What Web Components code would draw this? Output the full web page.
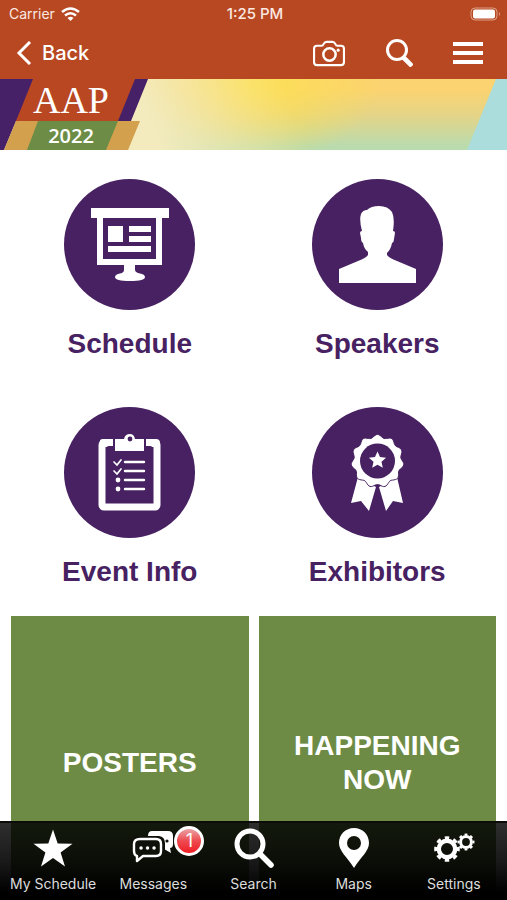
<!DOCTYPE html>
<html lang="en">
<head>
<meta charset="utf-8">
<meta name="viewport" content="width=device-width, initial-scale=1">
<title>AAP 2022</title>
<style>
    body {
        margin: 0;
        background: #fff;
        font-family: Inter, "Liberation Sans", sans-serif;
    }
</style>
</head>
<body>
<event-app>
    <status-bar slot="top" carrier="Carrier" time="1:25 PM"></status-bar>
    <nav-bar slot="top">Back</nav-bar>
    <event-banner year="2022">AAP</event-banner>
    <tile-grid>
        <icon-tile icon="schedule">Schedule</icon-tile>
        <icon-tile icon="speakers">Speakers</icon-tile>
        <icon-tile icon="info">Event Info</icon-tile>
        <icon-tile icon="exhibitors">Exhibitors</icon-tile>
        <color-tile>POSTERS</color-tile>
        <color-tile>HAPPENING NOW</color-tile>
    </tile-grid>
    <tab-bar slot="bottom">
        <tab-item icon="star">My Schedule</tab-item>
        <tab-item icon="messages" badge="1">Messages</tab-item>
        <tab-item icon="search">Search</tab-item>
        <tab-item icon="pin">Maps</tab-item>
        <tab-item icon="gears">Settings</tab-item>
    </tab-bar>
</event-app>

<script>
// Icons inside the purple circles, 131 x 131
const tileIcons = {
    schedule: `
        <path fill="#fff" d="M27 29H105V39H98V86H71V91Q71 93 74 94Q81 95 81 98Q81 102 66 102Q51 102 51 98Q51 95 58 94Q60 93 60 91V86H33V39H27Z"/>
        <path fill="#472161" d="M39 39H92V80H39Z"/>
        <path fill="#fff" d="M44 47H59V63H44ZM65 47H87V53H65ZM65 57H87V63H65ZM44 67H87V73H44Z"/>`,
    speakers: `
        <path fill="#fff" d="M27 104V90L46 82Q54 79 56 76V73Q52 70 51 64Q49 63 49 59L48 54Q48 52 50 52Q47 41 49 35Q51 31 55 31Q59 27 67 27Q76 27 80 33Q83 39 81 52Q83 52 83 54L82 60Q82 63 80 64Q79 70 75 74V76Q77 79 85 82L104 90V104Z"/>`,
    info: `
        <rect x="38" y="36" width="55" height="64" rx="2" fill="none" stroke="#fff" stroke-width="7"/>
        <path fill="#fff" d="M36 36Q35 32 39 32H92Q96 32 96 36V40H36Z"/>
        <path fill="#472161" d="M49 30H82V39H86Q89 39 89 43V48H42V43Q42 39 45 39H49Z"/>
        <path fill="#fff" d="M51 32H60Q61 27 66 27Q70 27 71 32H80V44H51Z"/>
        <circle cx="66" cy="32" r="2.4" fill="#472161"/>
        <path d="M61 55H80M61 64H80M61 73H80M61 82H80" stroke="#fff" stroke-width="2.4" stroke-linecap="round"/>
        <path d="M50 55L53 58L57 53M50 64L53 67L57 62" fill="none" stroke="#fff" stroke-width="1.7" stroke-linecap="round"/>
        <circle cx="54" cy="73" r="2.4" fill="#fff"/><circle cx="54" cy="82" r="2.4" fill="#fff"/>`,
    exhibitors: `
        <path fill="#fff" d="M46 70L39 96L49 94L57 104L64 80ZM85 70L91 96L81 94L74 104L67 80Z"/>
        <path d="${rosette(65.5, 54, 25, 1.5, 11)}" fill="#fff" stroke="#472161" stroke-width="1"/>
        <circle cx="65.5" cy="54" r="17.5" fill="#472161"/>
        <path fill="#fff" d="${star(65.5, 53.5, 9, 4.2)}"/>`
};

// Tab bar icons, 44 x 44
const tabIcons = {
    star: `<path fill="#fff" d="${star(22, 24, 20.5, 8)}"/>`,
    messages: `
        <path fill="#fff" d="M21 5H37Q42 5 42 10V18Q42 22 39 22L40 27L33 23H17V10Q17 5 21 5Z"/>
        <path fill="#0e1109" d="M6 10H28Q34 11 34 17V26Q34 31 29 32H14L2 38L4 32Q0 31 0 26V17Q0 11 6 10Z"/>
        <path d="M9 13H25Q30 13 30 18V25Q30 30 25 30H12L6 35V30Q3 29 3 25V18Q3 13 9 13Z" fill="none" stroke="#fff" stroke-width="2.4" stroke-linejoin="round"/>
        <path d="M10 22H10.1M16.5 22H16.6M23 22H23.1" stroke="#fff" stroke-width="3.4" stroke-linecap="round"/>
        <circle cx="36" cy="15" r="1.6" fill="#0e1109"/>`,
    search: `
        <circle cx="18" cy="18" r="13" fill="none" stroke="#fff" stroke-width="5"/>
        <path d="M28 28L39 39" stroke="#fff" stroke-width="5.6" stroke-linecap="round"/>`,
    pin: `<path fill="#fff" fill-rule="evenodd" d="M22 2C13.5 2 7 8.5 7 17C7 25 15 31 22 42C29 31 37 25 37 17C37 8.5 30.5 2 22 2ZM22 10A7 7 0 1 1 22 24A7 7 0 1 1 22 10Z"/>`,
    gears: `
        <g fill="none" stroke="#fff">
            <circle cx="15" cy="23" r="8.2" stroke-width="4.4"/>
            <circle cx="15" cy="23" r="11.3" stroke-width="3" pathLength="80" stroke-dasharray="5 5" stroke-dashoffset="2.5"/>
            <circle cx="34" cy="16" r="5.4" stroke-width="3"/>
            <circle cx="34" cy="16" r="7.5" stroke-width="2" pathLength="80" stroke-dasharray="5 5" stroke-dashoffset="2.5"/>
        </g>`
};

function star(cx, cy, outer, inner) {
    const points = [];
    for (let i = 0; i < 10; i++) {
        const r = i % 2 ? inner : outer;
        const a = Math.PI * (i / 5 - 0.5);
        points.push((cx + r * Math.cos(a)).toFixed(1) + ' ' + (cy + r * Math.sin(a)).toFixed(1));
    }
    return 'M' + points.join('L') + 'Z';
}

function rosette(cx, cy, radius, wave, lobes) {
    const points = [];
    for (let i = 0; i < 132; i++) {
        const a = Math.PI * 2 * i / 132;
        const r = radius + wave * Math.sin(a * lobes);
        points.push((cx + r * Math.cos(a)).toFixed(1) + ' ' + (cy + r * Math.sin(a)).toFixed(1));
    }
    return 'M' + points.join('L') + 'Z';
}

class EventApp extends HTMLElement {
    connectedCallback() {
        const shadow = this.attachShadow({ mode: 'open' });
        shadow.innerHTML = `
            <style>
                :host {
                    display: grid;
                    grid-template-rows: auto minmax(0, 1fr) auto;
                    height: 100vh;
                }
                header {
                    grid-area: 1 / 1;
                    background: #b74821;
                }
                /* content scrolls under the translucent tab bar */
                main {
                    grid-area: 2 / 1 / 4 / 2;
                    overflow-y: auto;
                    scrollbar-width: none;
                }
                footer {
                    grid-area: 3 / 1;
                    z-index: 1;
                }
            </style>
            <header><slot name="top"></slot></header>
            <main><slot></slot></main>
            <footer><slot name="bottom"></slot></footer>
        `;
    }
}
customElements.define('event-app', EventApp);

class StatusBar extends HTMLElement {
    connectedCallback() {
        const shadow = this.attachShadow({ mode: 'open' });
        shadow.innerHTML = `
            <style>
                :host {
                    display: grid;
                    grid-template-columns: 1fr auto 1fr;
                    align-items: center;
                    height: 27px;
                    padding: 0 6px 0 9px;
                    font-size: 14px;
                    color: #fbe9e2;
                }
                .carrier {
                    display: flex;
                    align-items: center;
                    gap: 6px;
                }
                .time {
                    font-size: 15px;
                    font-weight: 500;
                }
                .battery {
                    justify-self: end;
                }
                svg {
                    display: block;
                }
            </style>
            <div class="carrier">
                <span>${this.getAttribute('carrier')}</span>
                <svg width="19" height="14" viewBox="0 0 19 14" fill="none" stroke="#fff" stroke-width="2.6">
                    <path d="M1 5Q9.5 -2 18 5"/>
                    <path d="M4 8.5Q9.5 4 15 8.5"/>
                    <path d="M6.5 11Q9.5 8.5 12.5 11L9.5 14Z" fill="#fff" stroke="none"/>
                </svg>
            </div>
            <span class="time">${this.getAttribute('time')}</span>
            <svg class="battery" width="31" height="14" viewBox="0 0 31 14">
                <rect x="1" y="1" width="26" height="12" rx="4" fill="none" stroke="#dd9f88"/>
                <rect x="3" y="2.5" width="22" height="9" rx="2" fill="#fff"/>
                <path d="M29 5Q31 7 29 9Z" fill="#dd9f88"/>
            </svg>
        `;
    }
}
customElements.define('status-bar', StatusBar);

class NavBar extends HTMLElement {
    connectedCallback() {
        const shadow = this.attachShadow({ mode: 'open' });
        shadow.innerHTML = `
            <style>
                :host {
                    display: flex;
                    align-items: center;
                    height: 52px;
                    padding: 0 24px 0 16px;
                    color: #fff;
                }
                button {
                    display: flex;
                    align-items: center;
                    padding: 0;
                    border: 0;
                    background: none;
                    color: inherit;
                    font: 500 20px Inter, sans-serif;
                    cursor: pointer;
                }
                .back {
                    gap: 10px;
                }
                .actions {
                    display: flex;
                    align-items: center;
                    gap: 40px;
                    margin-left: auto;
                }
                svg {
                    display: block;
                    fill: none;
                    stroke: #fff;
                }
            </style>
            <button class="back">
                <svg width="16" height="24" viewBox="0 0 16 24" stroke-width="3"><path d="M14 1L3 12L14 23"/></svg>
                <slot></slot>
            </button>
            <div class="actions">
                <button aria-label="Camera">
                    <svg width="32" height="27" viewBox="0 0 33 28" stroke-width="2.2">
                        <path d="M4 6H9Q10 6 11 4Q12 2 14 2H20Q22 2 23 4Q24 6 25 6H29Q32 6 32 9V23Q32 26 29 26H4Q1 26 1 23V9Q1 6 4 6Z"/>
                        <circle cx="17" cy="15" r="6.4" stroke-width="2.6"/>
                        <circle cx="26" cy="10.5" r="1.6" fill="#fff" stroke="none"/>
                    </svg>
                </button>
                <button aria-label="Search">
                    <svg width="28" height="28" viewBox="0 0 28 28">
                        <circle cx="12" cy="11" r="9.5" stroke-width="3"/>
                        <path d="M18 18L27 27" stroke-width="4.6"/>
                    </svg>
                </button>
                <button aria-label="Menu">
                    <svg width="30" height="24" viewBox="0 0 30 24" stroke-width="4"><path d="M0 3H30M0 12H30M0 21H30"/></svg>
                </button>
            </div>
        `;
    }
}
customElements.define('nav-bar', NavBar);

class EventBanner extends HTMLElement {
    connectedCallback() {
        const shadow = this.attachShadow({ mode: 'open' });
        shadow.innerHTML = `
            <style>
                :host {
                    display: flex;
                    justify-content: space-between;
                    height: 71px;
                    background:
                        linear-gradient(70deg, #f3ebbd 30%, rgba(243, 235, 189, 0) 58%),
                        radial-gradient(ellipse 130px 80px at 250px 5px, #fce052, rgba(252, 224, 82, 0)),
                        linear-gradient(#fbd370 15%, #e5d487 50%, #b9dbae 95%);
                }
                .logo {
                    display: grid;
                }
                .logo > * {
                    grid-area: 1 / 1;
                }
                .words {
                    display: grid;
                    grid-template-rows: 42px 29px;
                    justify-items: center;
                    align-items: center;
                    width: 142px;
                    color: #fff;
                }
                .name {
                    font: 38px "Liberation Serif", serif;
                }
                .year {
                    font: 600 20px "Open Sans", sans-serif;
                }
                svg {
                    display: block;
                }
            </style>
            <div class="logo">
                <svg width="148" height="71" viewBox="0 0 148 71">
                    <path fill="#472167" d="M0 0H148L131 42H16L4 71H0Z"/>
                    <path fill="#b94722" d="M33 0H135L118 42H16Z"/>
                    <path fill="#d3a04d" d="M16 42H140L128 71H4Z"/>
                    <path fill="#6d8d47" d="M38 42H118L106 71H27Z"/>
                </svg>
                <div class="words">
                    <span class="name"><slot></slot></span>
                    <span class="year">${this.getAttribute('year')}</span>
                </div>
            </div>
            <svg width="40" height="71" viewBox="0 0 40 71"><path fill="#aadddb" d="M29 0H40V71H0Z"/></svg>
        `;
    }
}
customElements.define('event-banner', EventBanner);

class TileGrid extends HTMLElement {
    connectedCallback() {
        const shadow = this.attachShadow({ mode: 'open' });
        shadow.innerHTML = `
            <style>
                :host {
                    display: grid;
                    grid-template-columns: 1fr 1fr;
                    column-gap: 10px;
                    padding: 10px 11px;
                    font-family: "Liberation Sans", sans-serif;
                    font-size: 28px;
                    font-weight: 700;
                }
            </style>
            <slot></slot>
        `;
    }
}
customElements.define('tile-grid', TileGrid);

class IconTile extends HTMLElement {
    connectedCallback() {
        const shadow = this.attachShadow({ mode: 'open' });
        shadow.innerHTML = `
            <style>
                :host {
                    display: block;
                }
                a {
                    display: flex;
                    flex-direction: column;
                    align-items: center;
                    gap: 18px;
                    padding: 19px 0 28px;
                    color: #472161;
                    line-height: 32px;
                    text-decoration: none;
                }
                svg {
                    display: block;
                    border-radius: 50%;
                    background: #472161;
                }
            </style>
            <a href="#${this.getAttribute('icon')}">
                <svg width="131" height="131" viewBox="0 0 131 131">${tileIcons[this.getAttribute('icon')]}</svg>
                <span><slot></slot></span>
            </a>
        `;
    }
}
customElements.define('icon-tile', IconTile);

class ColorTile extends HTMLElement {
    connectedCallback() {
        const shadow = this.attachShadow({ mode: 'open' });
        shadow.innerHTML = `
            <style>
                :host {
                    display: block;
                }
                a {
                    display: flex;
                    align-items: center;
                    justify-content: center;
                    min-height: 294px;
                    padding: 0 30px;
                    box-sizing: border-box;
                    background: #6d8b45;
                    color: #fff;
                    line-height: 34px;
                    text-align: center;
                    text-decoration: none;
                }
            </style>
            <a href="#"><span><slot></slot></span></a>
        `;
    }
}
customElements.define('color-tile', ColorTile);

class TabBar extends HTMLElement {
    connectedCallback() {
        const shadow = this.attachShadow({ mode: 'open' });
        shadow.innerHTML = `
            <style>
                nav {
                    display: flex;
                    padding: 0 3px;
                    border-top: 2px solid #0c0d09;
                    background: linear-gradient(rgba(0, 0, 0, 0.82), rgba(0, 0, 0, 0.9) 50%, #000 90%);
                }
            </style>
            <nav><slot></slot></nav>
        `;
    }
}
customElements.define('tab-bar', TabBar);

class TabItem extends HTMLElement {
    connectedCallback() {
        const shadow = this.attachShadow({ mode: 'open' });
        const badge = this.getAttribute('badge');
        shadow.innerHTML = `
            <style>
                :host {
                    display: block;
                    flex: 1 1 0;
                }
                button {
                    display: flex;
                    flex-direction: column;
                    align-items: center;
                    gap: 4px;
                    width: 100%;
                    padding: 3px 0 6px;
                    border: 0;
                    background: none;
                    color: #ddd;
                    font: 14px/20px Inter, sans-serif;
                    white-space: nowrap;
                    cursor: pointer;
                }
                .icon {
                    position: relative;
                }
                svg {
                    display: block;
                }
                .badge {
                    position: absolute;
                    top: 0;
                    left: 43px;
                    width: 24px;
                    border: 3px solid #fff;
                    border-radius: 50%;
                    background: linear-gradient(#e9a3a5, #ee4a50 50%, #f01c24);
                    color: #fff;
                    font-size: 18px;
                    line-height: 24px;
                    text-align: center;
                }
            </style>
            <button>
                <span class="icon">
                    <svg width="44" height="44" viewBox="0 0 44 44">${tabIcons[this.getAttribute('icon')]}</svg>
                    ${badge ? `<span class="badge">${badge}</span>` : ''}
                </span>
                <span><slot></slot></span>
            </button>
        `;
    }
}
customElements.define('tab-item', TabItem);
</script>
</body>
</html>
